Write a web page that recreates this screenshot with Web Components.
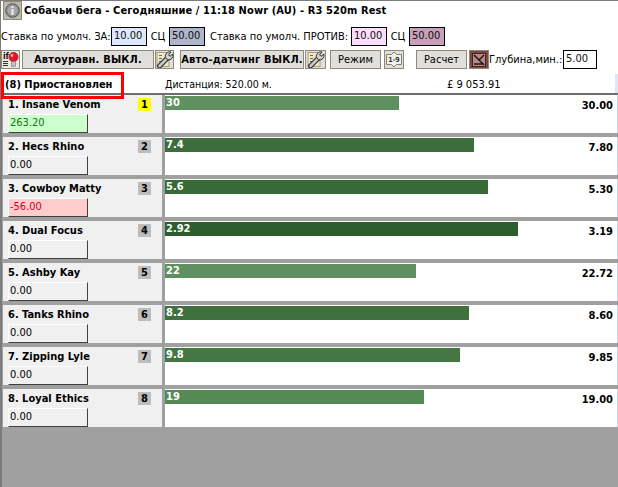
<!DOCTYPE html>
<html><head><meta charset="utf-8">
<style>
html,body{margin:0;padding:0;height:100%;overflow:hidden}
body{background:#a0a0a0;font:11px "DejaVu Sans Condensed","DejaVu Sans",sans-serif;font-stretch:condensed}
</style></head><body>
<race-app></race-app>
<template id="t-btn"><style>
:host{display:inline-flex;align-items:center;justify-content:center;box-sizing:border-box;height:19px;background:#e0dfdb;border:1px solid #8f8a78;color:#000;font:11px "DejaVu Sans Condensed","DejaVu Sans",sans-serif;font-stretch:condensed;white-space:nowrap;flex:none}
:host([bold]){font-weight:700;letter-spacing:.2px}
svg{display:block}
</style><slot></slot></template>
<template id="t-box"><style>
:host{display:block;box-sizing:border-box;width:36px;height:19px;border:1px solid #000;font:11px "DejaVu Sans Condensed","DejaVu Sans",sans-serif;font-stretch:condensed;line-height:15px;padding-left:2px;color:#111;flex:none;background:var(--bg,#fff)}
</style><slot></slot></template>
<template id="t-row"><style>
:host{display:flex;height:38px;margin-bottom:4px;gap:3px;font-stretch:condensed}
.l{width:159px;background:#f0f0f0;position:relative;box-sizing:border-box;flex:none}
.top{display:flex;justify-content:space-between;height:19px;align-items:center;padding:0 11px 0 5px}
.name{font:700 11px "DejaVu Sans Condensed","DejaVu Sans",sans-serif;font-stretch:condensed;color:#000}
.num{width:13px;height:13px;background:#bdbdbd;font:700 11px/13px "DejaVu Sans Condensed","DejaVu Sans",sans-serif;font-stretch:condensed;text-align:center;color:#000}
:host([first]) .num{background:#ffff00}
.pl{box-sizing:border-box;width:80px;height:19px;margin-left:5px;background:var(--pl,#f0f0f0);color:var(--plc,#000);font:11px/16px "DejaVu Sans Condensed","DejaVu Sans",sans-serif;font-stretch:condensed;padding-left:1px;border-right:1px solid #404040;border-bottom:1px solid #404040;border-top:1px solid #fff;border-left:1px solid #fff}
.r{flex:1;background:#fff;display:flex;justify-content:space-between;position:relative;padding-top:1px;box-sizing:border-box;border-right:1px solid #c6d3ee}
.bar{height:14px;background:var(--c);color:#fff;font:700 11px/14px "DejaVu Sans Condensed","DejaVu Sans",sans-serif;font-stretch:condensed;padding-left:1px;box-sizing:border-box;width:var(--w);flex:none}
.v{font:700 11px/13px "DejaVu Sans Condensed","DejaVu Sans",sans-serif;font-stretch:condensed;color:#000;margin-right:4px;margin-top:3px}
</style>
<div class="l"><div class="top"><span class="name"><slot name="name"></slot></span><span class="num"><slot name="num"></slot></span></div><div class="pl"><slot name="pl"></slot></div></div>
<div class="r"><div class="bar"><slot name="bar"></slot></div><div class="v"><slot name="v"></slot></div></div>
</template>
<template id="t-wrench"><style>
:host{display:block}svg{display:block}
</style><svg width="18" height="17" viewBox="0 0 18 17"><rect x="1" y="1.500" width="12" height="14" fill="#efe6c2" stroke="#a89f80"/><path d="M3 4.500h3M3 7.500h3M3 10.500h2" stroke="#6d6a5c"/><path d="M3.500 15 11.500 7" stroke="#2f2f2f" stroke-width="5" stroke-linecap="round"/><path d="M3.500 15 11.500 7" stroke="#c9c9c9" stroke-width="2.600" stroke-linecap="round"/><path d="M9.500 6.500a4.500 4.500 0 0 1 5.500-5.500l-2.500 2.800 1.500 1.500 2.800-2.300a4.500 4.500 0 0 1-5.300 5.800z" fill="#d0d0d0" stroke="#2f2f2f"/></svg></template>
<template id="t-app"><style>
:host{display:block;height:487px;box-sizing:border-box;border-left:2px solid #7c7c7c;border-top:1px solid #7c7c7c;font:11px "DejaVu Sans Condensed","DejaVu Sans",sans-serif;font-stretch:condensed;color:#000}
.head{background:#fff;height:92px;margin-left:-1px;position:relative;border-bottom:2px solid #6e6e6e}
.title{display:flex;align-items:center;gap:2px;height:19px;padding-left:2px;font-weight:700;letter-spacing:.1px;color:#000}
.ibtn{width:19px;height:19px;background:#b9b9b1;border:1px solid #8f8a78;box-sizing:border-box;display:flex;align-items:center;justify-content:center;flex:none}
.stake{display:flex;align-items:center;height:19px;margin-top:7px;white-space:nowrap}
.tools{display:flex;align-items:center;height:19px;margin-top:4px}
.status{display:flex;height:24px;align-items:center;position:relative;box-sizing:border-box;padding-top:6px}
.red{position:absolute;left:0;top:3px;width:123px;height:27px;border:3px solid #f00;box-sizing:border-box;z-index:5}
.strip{margin-left:auto;align-self:flex-end;width:3px;height:19px;background:#dde6fb}
.rows{padding:0 0 0 1px}
</style>
<div class="head">
 <div class="title"><div class="ibtn"><svg width="15" height="15" viewBox="0 0 15 15"><circle cx="7.5" cy="7.5" r="6.800" fill="#8d8d8d" stroke="#555"/><circle cx="7.5" cy="7.5" r="5" fill="#a8a8a8"/><rect x="6.5" y="3" width="2" height="2" fill="#eee"/><rect x="6.5" y="6" width="2" height="6" fill="#eee"/></svg></div><span>Собачьи бега - Сегодняшние / 11:18 Nowr (AU) - R3 520m Rest</span></div>
 <div class="stake">
  <span style="width:110px;flex:none">Ставка по умолч. ЗА:</span>
  <stake-box style="--bg:#dde6fb">10.00</stake-box><span style="width:22px;text-align:center;flex:none">СЦ</span><stake-box style="--bg:#aeb4c9">50.00</stake-box>
  <span style="margin-left:5px;width:141px;flex:none">Ставка по умолч. ПРОТИВ:</span>
  <stake-box style="--bg:#fbdcfb">10.00</stake-box><span style="width:22px;text-align:center;flex:none">СЦ</span><stake-box style="--bg:#c8a0b9">50.00</stake-box>
 </div>
 <div class="tools">
  <tool-btn style="width:19px;margin-right:2px;background:#ece8dc"><svg width="17" height="17" viewBox="0 0 17 17"><text x="1" y="8" font-family="DejaVu Sans" font-weight="700" font-size="8.5" fill="#111">if</text><path d="M1 10.500h5M1 12.500h5M1 14.500h5" stroke="#333"/><circle cx="11.500" cy="6" r="4.500" fill="#ee1122" stroke="#b02030"/><circle cx="10" cy="4.500" r="1.400" fill="#ffb0b0"/><rect x="9.500" y="10.500" width="4" height="5" fill="#c0c0c0" stroke="#777" stroke-width=".6"/></svg></tool-btn>
  <tool-btn bold style="width:132px">Автоуравн. ВЫКЛ.</tool-btn>
  <tool-btn style="width:19px;margin-left:1px"><wrench-icon></wrench-icon></tool-btn>
  <tool-btn bold style="width:124px;margin-left:6px">Авто-датчинг ВЫКЛ.</tool-btn>
  <tool-btn style="width:21px;margin-left:1px"><wrench-icon></wrench-icon></tool-btn>
  <tool-btn style="width:51px;margin-left:4px">Режим</tool-btn>
  <tool-btn style="width:20px;margin-left:3px"><svg width="18" height="17" viewBox="0 0 18 17"><path d="M1.500 3.500h5l2.500-2.500 2.500 2.500h5v10h-5l-2.500 2.500-2.500-2.500h-5z" fill="#f2f0ea" stroke="#85806f"/><text x="9" y="11" text-anchor="middle" font-family="DejaVu Sans" font-weight="700" font-size="7" fill="#333">1-9</text></svg></tool-btn>
  <tool-btn style="width:51px;margin-left:12px">Расчет</tool-btn>
  <tool-btn style="width:20px;margin-left:2px;background:#7a4544"><svg width="16" height="16" viewBox="0 0 16 16"><rect x="1.500" y="1.500" width="13" height="13" fill="#b08c86" stroke="#4a2020"/><path d="M3 3 13 13M13 3 8 8M3 12h10" stroke="#2b1111" stroke-width="1.500" fill="none"/></svg></tool-btn>
  <span style="width:74px;flex:none;white-space:nowrap">Глубина,мин.:</span>
  <stake-box style="width:34px">5.00</stake-box>
 </div>
 <div class="status">
  <span style="margin-left:4px;width:160px;font-weight:700;color:#000;flex:none">(8) Приостановлен</span>
  <span style="font-size:10.500px">Дистанция: 520.00 м.</span>
  <span style="position:absolute;left:446px">£ 9 053.91</span>
  <div class="red"></div>
  <div class="strip"></div>
 </div>
</div>
<div class="rows"><slot></slot></div>
</template>
<script>
function def(n,t){customElements.define(n,class extends HTMLElement{constructor(){super();this.attachShadow({mode:'open'}).appendChild(document.getElementById(t).content.cloneNode(true))}})}
def('tool-btn','t-btn');def('stake-box','t-box');def('wrench-icon','t-wrench');def('race-row','t-row');def('race-app','t-app');
const app=document.querySelector('race-app');
const data=[['1. Insane Venom','1','263.20','30','30.00',234,'#5f9160'],['2. Hecs Rhino','2','0.00','7.4','7.80',309,'#3c6d3c'],['3. Cowboy Matty','3','-56.00','5.6','5.30',323,'#386a38'],['4. Dual Focus','4','0.00','2.92','3.19',353,'#2d5f2d'],['5. Ashby Kay','5','0.00','22','22.72',251,'#5f9160'],['6. Tanks Rhino','6','0.00','8.2','8.60',304,'#3f713f'],['7. Zipping Lyle','7','0.00','9.8','9.85',295,'#457745'],['8. Loyal Ethics','8','0.00','19','19.00',259,'#548a54']];
data.forEach((d,n)=>{const r=document.createElement('race-row');r.style.setProperty('--w',d[5]+'px');r.style.setProperty('--c',d[6]);if(n==0){r.setAttribute('first','');r.style.setProperty('--pl','#ccffcc');r.style.setProperty('--plc','#0a7a0a')}if(d[2].startsWith('-')){r.style.setProperty('--pl','#ffcccc');r.style.setProperty('--plc','#d0002a')}
['name','num','pl','bar','v'].forEach((s,i)=>{const e=document.createElement('span');e.slot=s;e.textContent=d[i];r.appendChild(e)});app.appendChild(r)});
</script>
</body></html>
